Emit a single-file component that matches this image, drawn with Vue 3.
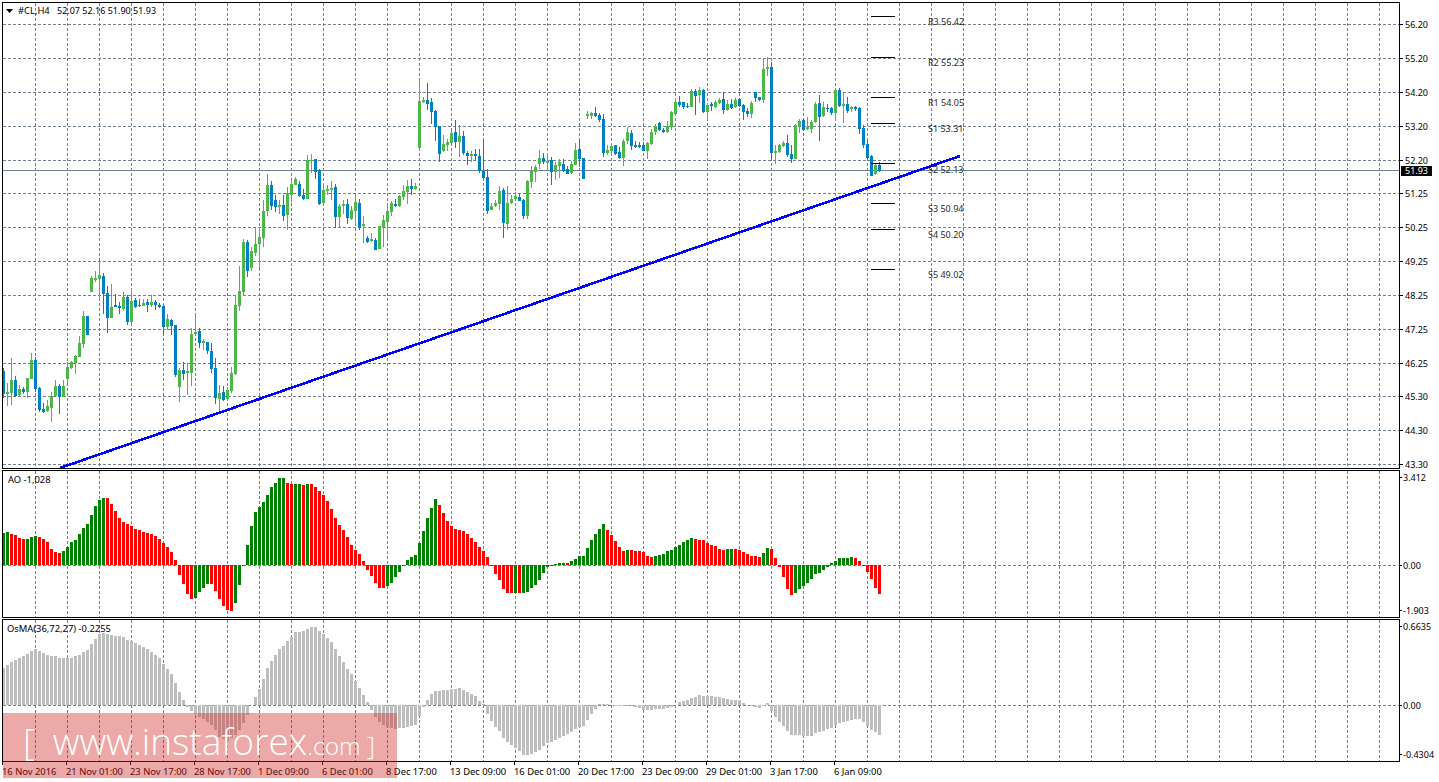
<script setup>
const gridX = Array.from({ length: 43 }, (_, i) => 35 + 32 * i)

const priceScale = [
  ['56.20', 24], ['55.20', 58], ['54.20', 92], ['53.20', 126], ['52.20', 160], ['51.25', 193], ['50.25', 227],
  ['49.25', 261], ['48.25', 295], ['47.25', 329], ['46.25', 363], ['45.30', 396], ['44.30', 430], ['43.30', 464]
]
const aoScale = [['3.412', 477], ['0.00', 565], ['-1.903', 610]]
const osmaScale = [['0.6635', 626], ['0.00', 705], ['-0.4304', 754]]

const pivots = [
  ['R3 56.42', 16], ['R2 55.23', 57], ['R1 54.05', 97], ['S1 53.31', 123],
  ['S2 52.13', 163], ['S3 50.94', 203], ['S4 50.20', 229], ['S5 49.02', 269]
]
const pivotLabelY = [21, 62, 102, 128, 169, 208, 234, 274]

const timeLabels = [
  '16 Nov 2016', '21 Nov 01:00', '23 Nov 17:00', '28 Nov 17:00', '1 Dec 09:00', '6 Dec 01:00', '8 Dec 17:00',
  '13 Dec 09:00', '16 Dec 01:00', '20 Dec 17:00', '23 Dec 09:00', '29 Dec 01:00', '3 Jan 17:00', '6 Jan 09:00'
]

// [rising, wick top, body top, body bottom, wick bottom], in pixel rows of the page
const candles = [
  [0,368,371,394,398],[1,383,392,394,406],[1,358,380,393,405],[0,376,380,396,397],[1,385,389,395,397],[0,387,389,392,394],
  [1,378,378,392,398],[1,353,360,379,379],[0,357,360,389,392],[0,387,388,410,412],[0,403,409,412,413],[1,400,406,411,412],
  [1,392,396,408,422],[1,380,386,396,396],[0,384,386,397,414],[1,380,386,397,397],[1,362,367,379,383],[1,361,362,368,369],
  [1,355,356,363,374],[1,336,343,357,357],[1,311,316,344,348],[0,316,316,335,335],[1,276,278,292,292],[1,271,278,280,282],
  [1,262,275,279,299],[0,273,276,294,314],[0,286,293,318,333],[1,284,307,318,318],[0,294,305,307,307],[0,302,306,308,314],
  [1,292,297,309,311],[0,295,297,322,325],[1,289,301,322,323],[0,298,300,307,308],[0,299,305,306,307],[1,299,303,306,306],
  [0,299,302,305,312],[1,295,302,305,307],[0,300,302,305,310],[0,303,305,307,308],[0,305,306,327,335],[1,314,319,327,330],
  [0,319,320,326,335],[0,325,325,375,377],[1,368,370,387,402],[0,362,370,374,380],[1,363,371,373,395],[1,328,334,373,386],
  [1,314,332,334,334],[0,328,331,343,348],[1,339,341,343,350],[0,342,342,351,354],[0,343,351,369,373],[0,358,368,398,404],
  [1,385,393,399,412],[0,386,392,400,401],[1,387,390,399,401],[1,367,373,391,393],[1,296,305,374,375],[1,266,291,306,311],
  [1,239,242,292,295],[0,240,242,271,277],[1,247,251,268,271],[1,228,244,253,256],[1,228,237,244,268],[1,200,211,238,247],
  [1,174,185,211,216],[0,181,185,206,210],[0,195,200,207,212],[1,200,205,207,214],[0,195,205,216,221],[1,187,193,215,230],
  [1,180,184,195,202],[1,177,179,185,185],[0,181,184,196,197],[0,189,195,199,200],[1,155,160,199,199],[1,154,160,161,173],
  [0,159,159,172,179],[0,169,170,204,205],[1,185,190,203,204],[1,185,189,191,195],[1,181,188,190,200],[0,184,187,217,228],
  [1,204,206,217,227],[1,200,204,206,214],[0,199,204,218,224],[1,206,210,219,220],[1,195,202,211,224],[0,199,203,228,230],
  [1,216,224,226,243],[0,236,238,242,243],[1,233,239,241,242],[0,238,240,250,250],[1,226,226,249,249],[1,215,220,228,247],
  [1,204,211,222,238],[1,201,203,212,216],[0,199,204,206,207],[1,195,196,206,207],[1,185,191,197,200],[1,180,186,192,204],
  [0,179,186,189,195],[1,183,186,189,190],[1,80,101,148,149],[1,97,100,102,103],[0,83,100,104,110],[0,98,102,112,124],
  [0,110,111,127,141],[0,126,126,154,162],[1,135,144,151,152],[1,139,142,145,151],[1,130,133,143,143],[0,120,132,142,148],
  [1,125,136,142,157],[0,131,136,153,155],[0,151,153,156,165],[1,151,154,156,162],[0,149,154,156,161],[0,149,156,171,173],
  [0,140,171,178,179],[0,169,177,211,214],[1,203,206,210,210],[1,200,203,206,207],[1,186,191,204,210],[0,188,190,223,238],
  [1,186,203,224,230],[1,195,199,203,204],[1,192,196,199,199],[0,194,197,201,201],[0,199,200,216,219],[1,180,181,216,219],
  [1,166,171,182,188],[1,165,167,172,182],[1,150,158,164,169],[0,153,158,162,164],[1,153,161,163,168],[0,157,160,172,185],
  [1,162,165,172,180],[1,159,162,166,178],[0,159,164,171,172],[0,166,169,174,174],[1,161,164,173,174],[1,143,150,165,165],
  [0,141,149,159,167],[0,158,158,179,179],[1,111,114,116,119],[1,112,113,116,119],[0,107,113,116,117],[0,113,115,120,122],
  [0,114,119,153,157],[1,145,150,153,155],[1,144,146,151,155],[0,145,145,154,155],[0,147,152,158,159],[1,139,141,158,166],
  [1,127,132,141,144],[0,130,133,146,150],[0,141,145,147,148],[0,142,145,147,148],[0,142,145,151,151],[1,142,143,151,159],
  [1,129,132,144,145],[1,124,126,132,135],[0,122,123,130,131],[0,128,130,132,133],[1,121,126,132,133],[1,111,112,127,130],
  [1,99,102,114,115],[0,96,102,105,107],[0,102,102,107,109],[0,103,106,107,108],[1,89,91,107,107],[0,89,91,96,115],
  [1,87,90,95,103],[0,89,90,112,113],[1,104,105,112,119],[0,102,104,106,111],[1,100,102,107,108],[1,98,100,103,104],
  [0,92,99,110,114],[1,100,104,110,111],[0,99,104,108,109],[1,98,100,107,108],[0,98,99,106,107],[0,104,105,112,120],
  [0,108,111,114,117],[1,101,103,114,118],[0,92,92,98,102],[0,97,97,100,101],[1,58,69,100,103],[1,57,67,69,76],
  [0,62,67,153,160],[1,145,151,153,164],[1,144,145,152,153],[1,141,143,146,147],[0,135,143,155,157],[0,145,154,159,163],
  [1,124,125,159,159],[1,119,121,126,133],[0,119,120,130,131],[1,117,127,129,130],[1,120,122,129,133],[1,102,104,122,123],
  [0,95,103,117,141],[1,102,107,116,117],[0,104,108,109,112],[0,107,108,113,115],[1,89,90,113,119],[0,88,90,106,107],
  [1,93,104,106,123],[0,97,104,111,113],[1,106,107,109,112],[0,106,107,109,111],[0,107,108,129,134],[0,125,128,145,148],
  [0,140,144,158,159],[0,155,156,176,176],[1,164,165,174,175],[0,162,165,171,172]
]

const aoValues = [
  32,33,31,30,27,26,26,28,29,28,26,23,16,13,12,14,18,23,25,31,37,41,50,59,65,67,67,61,54,47,43,41,39,36,35,33,32,31,29,26,
  22,18,13,5,-10,-19,-29,-34,-33,-27,-23,-19,-19,-26,-34,-41,-45,-46,-38,-20,-1,20,39,53,58,63,70,78,82,87,87,82,81,81,81,80,81,81,78,74,
  70,64,56,47,40,35,28,20,15,11,4,-5,-11,-18,-23,-23,-21,-18,-12,-7,-1,5,8,10,22,34,47,57,66,60,52,44,39,36,35,34,31,27,23,18,
  14,8,-1,-9,-15,-24,-28,-28,-28,-28,-28,-27,-23,-20,-15,-8,-2,-1,1,2,2,2,4,6,9,9,17,25,31,36,41,35,30,24,18,14,15,15,14,14,
  13,9,8,9,10,11,14,15,18,20,23,25,27,26,25,25,22,20,19,16,15,16,16,16,15,13,11,9,9,8,12,17,16,7,-2,-12,-24,-30,-28,-24,
  -21,-18,-14,-9,-8,-5,-2,2,4,7,7,7,8,7,4,-1,-7,-14,-23,-29
]
const aoGreenRuns = [[0,1],[6,8],[15,25],[48,51],[58,70],[73,74],[76,76],[96,108],[128,128],[130,140],[142,150],[156,156],[163,172],[181,182],[190,191],[198,212]]

const osmaValues = [
  37,40,43,45,47,49,51,54,56,54,52,50,49,49,47,47,47,47,49,50,53,55,61,66,71,72,71,70,69,69,68,65,64,62,60,58,56,53,50,47,
  41,36,31,22,13,5,-2,-6,-9,-12,-14,-17,-20,-25,-32,-34,-36,-33,-30,-25,-18,-10,0,8,16,26,37,44,50,56,59,64,68,73,73,74,76,78,78,74,
  71,67,63,56,49,43,36,31,24,17,10,3,-5,-12,-17,-20,-22,-23,-24,-23,-23,-22,-21,-20,-11,-2,5,11,14,14,15,15,16,16,17,15,13,11,9,4,
  1,-9,-16,-22,-26,-33,-37,-40,-43,-46,-50,-50,-49,-47,-45,-41,-38,-37,-35,-33,-31,-29,-27,-24,-22,-21,-15,-9,-4,1,1,1,0,-1,-1,-1,-1,-1,-2,-3,
  -5,-5,-5,-4,-4,-4,-3,-2,0,3,4,5,7,8,10,9,9,9,8,8,7,6,5,5,5,2,0,-1,-2,-3,-1,2,-6,-12,-17,-21,-26,-30,-30,-30,
  -31,-31,-31,-28,-27,-26,-24,-23,-20,-18,-17,-16,-15,-14,-14,-17,-21,-25,-27,-30
]

const columnX = (i) => 4 * i + 3
const aoBars = aoValues.map((v, i) => ({
  x: columnX(i) - 1,
  y: v >= 0 ? 565 - v : 565,
  h: Math.abs(v),
  rising: aoGreenRuns.some(([a, b]) => i >= a && i <= b)
}))
const osmaBars = osmaValues.map((v, i) => ({
  x: columnX(i) - 1,
  y: v >= 0 ? 705 - v : 705,
  h: Math.abs(v)
}))
const bars = candles.map(([up, wt, bt, bb, wb], i) => ({
  x: columnX(i), up: !!up, wt, wh: Math.max(wb - wt, 1), bt, bh: Math.max(bb - bt, 1)
}))
</script>

<template>
  <div class="terminal">
    <section class="pane pane-main">
      <div class="plot">
        <svg class="canvas" viewBox="3 3 1396 465" width="1396" height="465">
          <g class="grid">
            <line v-for="x in gridX" :key="x" :x1="x + 0.5" :x2="x + 0.5" y1="3" y2="468" />
            <line v-for="t in priceScale" :key="t[0]" x1="3" x2="1399" :y1="t[1] + 0.5" :y2="t[1] + 0.5" />
          </g>
          <line class="bid" x1="3" x2="1399" y1="170.5" y2="170.5" />
          <g v-for="c in bars" :key="c.x" :class="c.up ? 'up' : 'down'">
            <rect :x="c.x" :y="c.wt" width="1" :height="c.wh" />
            <rect :x="c.x - 1" :y="c.bt" width="3" :height="c.bh" />
          </g>
          <g v-for="(p, i) in pivots" :key="p[0]">
            <line class="pivot" x1="871" x2="895" :y1="p[1] + 0.5" :y2="p[1] + 0.5" />
            <text class="pivot-label" x="928" :y="pivotLabelY[i] + 3.5">{{ p[0] }}</text>
          </g>
          <line class="trend" x1="60" y1="468" x2="960" y2="156" />
        </svg>
        <div class="legend">
          <svg class="caret" viewBox="0 0 7 4" width="7" height="4"><polygon points="0,0 7,0 3.5,4" /></svg>
          <span class="legend-symbol">#CL,H4</span>
          <span class="legend-prices">52.07 52.16 51.90 51.93</span>
        </div>
      </div>
      <div class="scale">
        <div v-for="t in priceScale" :key="t[0]" class="tick tick-price" :style="{ top: t[1] - 2 + 'px' }">
          <i></i><span>{{ t[0] }}</span>
        </div>
        <div class="bid-box"><span>51.93</span></div>
      </div>
    </section>

    <section class="pane pane-ao">
      <div class="plot">
        <svg class="canvas" viewBox="3 471 1396 146" width="1396" height="146">
          <g class="grid">
            <line v-for="x in gridX" :key="x" :x1="x + 0.5" :x2="x + 0.5" y1="471" y2="617" />
            <line x1="3" x2="1399" y1="565.5" y2="565.5" />
          </g>
          <rect v-for="b in aoBars" :key="b.x" :x="b.x" :y="b.y" width="3" :height="b.h" :class="b.rising ? 'ao-up' : 'ao-down'" />
        </svg>
        <div class="legend legend-ind legend-ao">AO -1,028</div>
      </div>
      <div class="scale">
        <div v-for="t in aoScale" :key="t[0]" class="tick" :style="{ top: t[1] - 470 + 'px' }">
          <i></i><span>{{ t[0] }}</span>
        </div>
      </div>
    </section>

    <section class="pane pane-osma">
      <div class="plot">
        <svg class="canvas" viewBox="3 620 1396 141" width="1396" height="141">
          <g class="grid">
            <line v-for="x in gridX" :key="x" :x1="x + 0.5" :x2="x + 0.5" y1="620" y2="761" />
            <line x1="3" x2="1399" y1="705.5" y2="705.5" />
          </g>
          <rect v-for="b in osmaBars" :key="b.x" class="osma" :x="b.x" :y="b.y" width="3" :height="b.h" />
        </svg>
        <div class="legend legend-ind">OsMA(36,72,27) -0.2255</div>
      </div>
      <div class="scale">
        <div v-for="t in osmaScale" :key="t[0]" class="tick" :style="{ top: t[1] - 619 + 'px' }">
          <i></i><span>{{ t[0] }}</span>
        </div>
      </div>
    </section>

    <footer class="time-axis">
      <span v-for="t in timeLabels" :key="t" class="time-cell">{{ t }}</span>
    </footer>

    <div class="watermark">
      <span class="wm-bracket">[</span>
      <span class="wm-site">www.instaforex</span>
      <span class="wm-tld">.com</span>
      <span class="wm-close">]</span>
    </div>
  </div>
</template>

<style scoped>
.terminal {
  position: relative;
  width: 1439px;
  height: 782px;
  padding: 2px 0 0 2px;
  box-sizing: border-box;
  display: flex;
  flex-direction: column;
  gap: 1px;
  overflow: hidden;
  background: #fff;
  color: #000;
  font-family: "Noto Sans", "Liberation Sans", sans-serif;
  font-size: 9px;
  line-height: 11px;
}
.pane {
  display: flex;
  flex: none;
}
.pane-main { height: 467px; }
.pane-ao { height: 148px; }
.pane-osma { height: 143px; }
.plot {
  position: relative;
  width: 1398px;
  flex: none;
  box-sizing: border-box;
  border: 1px solid #000;
}
.canvas {
  display: block;
  shape-rendering: crispEdges;
}
.grid line {
  stroke: #708090;
  stroke-width: 1;
  stroke-dasharray: 3 2;
}
.bid {
  stroke: #708090;
  stroke-width: 1;
}
.up { fill: #4db848; }
.down { fill: #0080c0; }
.pivot {
  stroke: #000;
  stroke-width: 1;
}
.pivot-label {
  fill: #2a2a2a;
  font-size: 9px;
}
.trend {
  stroke: #0000ff;
  stroke-width: 2.6;
}
.ao-up { fill: #008000; }
.ao-down { fill: #ff0000; }
.osma { fill: #bebebe; }
.legend {
  position: absolute;
  top: 2px;
  left: 3px;
  display: flex;
  align-items: center;
  white-space: nowrap;
  font-size: 9.4px;
}
.legend-ind {
  top: 3px;
  left: 4px;
}
.legend-ao {
  left: 5px;
}
.caret {
  fill: #000;
  margin-right: 5px;
}
.legend-symbol {
  width: 39px;
}
.legend-prices {
  font-size: 9px;
}
.scale {
  position: relative;
  width: 39px;
  flex: none;
}
.tick {
  position: absolute;
  left: 0;
  display: flex;
  align-items: center;
  gap: 1px;
  height: 11px;
  margin-top: -5px;
  white-space: nowrap;
}
.tick i {
  display: block;
  width: 2px;
  height: 1px;
  background: #000;
}
.tick-price {
  gap: 2px;
}
.tick-price i {
  width: 3px;
}
.bid-box {
  position: absolute;
  top: 164px;
  left: 1px;
  width: 31px;
  height: 10px;
  padding-left: 4px;
  box-sizing: border-box;
  background: #000;
  color: #fff;
  line-height: 10px;
}
.time-axis {
  display: flex;
  margin-left: -1px;
  margin-top: -1px;
  padding-left: 1px;
  color: #000;
}
.time-cell {
  position: relative;
  flex: none;
  width: 64px;
  padding-top: 4px;
  white-space: nowrap;
  font-size: 9.4px;
  line-height: 12px;
}
.time-cell::before {
  content: "";
  position: absolute;
  top: 0;
  left: 0;
  width: 1px;
  height: 3px;
  background: #000;
}
.watermark {
  position: absolute;
  left: 3px;
  top: 713px;
  width: 394px;
  height: 65px;
  padding: 10px 0 0 20px;
  box-sizing: border-box;
  display: flex;
  align-items: baseline;
  background: rgba(210, 37, 37, 0.4);
  color: #fff;
  font-family: "Open Sans", "Liberation Sans", sans-serif;
  font-weight: 300;
  line-height: 40px;
  white-space: nowrap;
}
.wm-bracket {
  font-size: 37px;
  line-height: 36px;
}
.wm-site {
  font-size: 37px;
  margin-left: 18px;
  line-height: 36px;
}
.wm-tld {
  font-size: 24.5px;
  line-height: 24px;
}
.wm-close {
  font-size: 26px;
  margin-left: 6px;
  line-height: 24px;
}
</style>

<style>
html, body {
  margin: 0;
  background: #fff;
}
</style>
